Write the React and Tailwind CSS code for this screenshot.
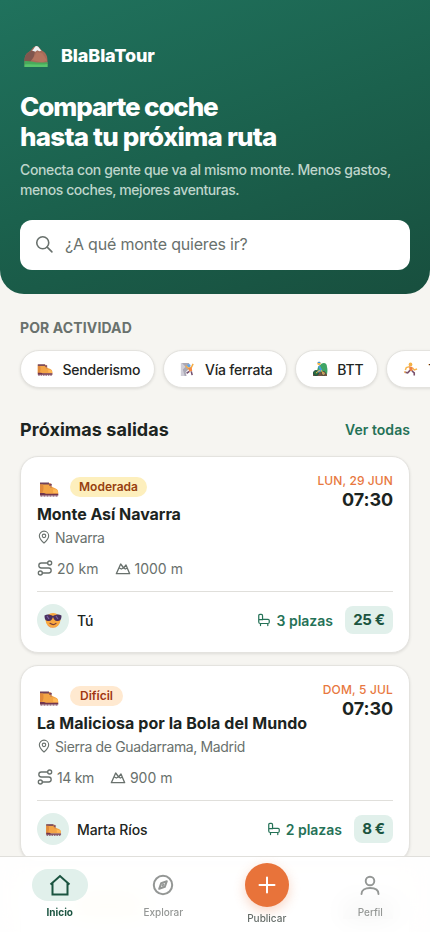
import React from "react";

const FONT = "font-['Inter','Liberation_Sans',sans-serif]";

function Boot({ className }) {
  return (
    <svg viewBox="0 0 20 16" className={className}>
      <path d="M1 2h10.5c.2 3 1.200 4 3.500 4.700 2.500.8 4 1.600 4.200 4.300v2H1z" fill="#f3a546" />
      <path d="M1 1.500h9v2H1z" fill="#70425b" />
      <path d="M1 3.500h3c1 3.500.5 6-1 9H1z" fill="#e18a3c" />
      <path d="M14 8.500c2-1 5 .5 5.200 3.500h-5z" fill="#ffb957" />
      <path d="M10.500 3h2v1.500h-2zM11 6h2" fill="#7b4259" stroke="#7b4259" strokeWidth=".5" />
      <path d="M1 12h4l2 .8h12.300V14.600H1z" fill="#71364f" />
      <path d="M1.500 15h17.500" stroke="#71364f" strokeWidth="1.200" strokeDasharray="2 1" />
    </svg>
  );
}

function Mountain() {
  return (
    <svg viewBox="0 0 24 23" className="h-[23px] w-6">
      <path d="M.5 17c0-6 1-8 5-10.500C8 5 9 1 12.500 1c3 0 3.500 3.500 6 5 4 2 5 5.500 5 10.500v3H.5z" fill="#a66b59" />
      <path d="M.5 16c0-5 2-8 5-9.500l6-2-2 8-4 5z" fill="#80564e" />
      <path d="m8 15 5-8 5.500 1.500 4.500 7-5 2z" fill="#b4745f" />
      <path d="M8 5.500C10 4.500 10.500 1 12.500 1s3 3 5 4.500l-2.200.8-2-1-2 1.500z" fill="#eef3f4" />
      <path d="M.5 16c7-.5 12 3 23 1v5H.5z" fill="#48aa5b" />
      <path d="M.5 19.500c7-1 16 1 23-.5v3H.5z" fill="#5ac46c" />
    </svg>
  );
}

function Climber() {
  return (
    <svg viewBox="0 0 16 16" className="h-[15px] w-[15px]">
      <path d="M1 1h9L8 5l1 3-3 3 1 4H1z" fill="#aaa8b5" />
      <path d="m2 1 4 4-3 3 2 7H1V1z" fill="#d0ced8" />
      <circle cx="9.500" cy="4" r="1.800" fill="#62a5e8" />
      <path d="m6 4 3 3 3-1 2-4" stroke="#f4ae48" strokeWidth="1.600" fill="none" />
      <path d="m8.500 6 4-.5.500 4-3 1z" fill="#f68b41" />
      <path d="m10 10-3 2m5-2 1 4" stroke="#735070" strokeWidth="1.700" fill="none" />
    </svg>
  );
}

function Biker() {
  return (
    <svg viewBox="0 0 16 16" className="h-4 w-4">
      <path d="M6 6c1-2 2-1 3-3 3-2 6-1 6 3 1 3 0 7 0 8H4z" fill="#3fa565" />
      <path d="M1 12c3-3 9-1 14 1v2H1z" fill="#735541" />
      <circle cx="4" cy="12" r="2.500" fill="#2b713f" stroke="#244c42" />
      <circle cx="11.500" cy="12.500" r="2" fill="#c19b60" stroke="#49483f" />
      <circle cx="7" cy="2.500" r="1.700" fill="#f3b64d" />
      <path d="M5.500 2c1-2 3-1 3 0z" fill="#3995df" />
      <path d="m7 5 2 4-3 2" stroke="#469de1" strokeWidth="2" fill="none" />
      <path d="m8 9-4 3m5-3 2 3" stroke="#f1b24a" fill="none" />
    </svg>
  );
}

function Runner() {
  return (
    <svg viewBox="0 0 16 16" className="h-[15px] w-[15px] shrink-0">
      <circle cx="8" cy="2.600" r="2" fill="#f4b247" />
      <path d="M7 5 3.500 6 2.500 8.500M10 6l2 2.500 3-1" stroke="#f7b54b" strokeWidth="1.500" fill="none" />
      <path d="m6.500 4.500 3.500.8.300 4.200H7z" fill="#ef8143" />
      <path d="m7.500 9-2.500 2.500L2 11M9.500 9.500l2.500 2v3" stroke="#79516c" strokeWidth="1.700" fill="none" />
      <path d="m2.500 11.500-1-1.500" stroke="#f4ad4e" strokeWidth="1.500" />
    </svg>
  );
}

function Cool() {
  return (
    <svg viewBox="0 0 20 20" className="h-5 w-5">
      <circle cx="10" cy="10.300" r="7.400" fill="#f9a83f" />
      <path d="M4 14a7 7 0 0 0 12 0c-2 4-9 6-12 0" fill="#e87649" />
      <path d="M1.500 5.500c3-1.500 5-1 8.500.5 3.500-1.500 5.500-2 8.500-.5 0 4.500-1.500 5.500-4.500 5.500-2 0-3-1.500-4-4-1 2.500-2 4-4 4-3 0-4.500-1-4.500-5.500" fill="#49305f" />
      <path d="m4 6 2 3m7-3 2 3" stroke="#7962a5" strokeWidth="1.200" />
      <path d="M7 13.300c2 1.500 4.500 1.500 6 0" stroke="#783e3d" strokeWidth="1.200" fill="none" strokeLinecap="round" />
    </svg>
  );
}

function Line({ className, children, sw = 1.5 }) {
  return (
    <svg viewBox="0 0 24 24" className={className} fill="none" stroke="currentColor" strokeWidth={sw} strokeLinecap="round" strokeLinejoin="round">
      {children}
    </svg>
  );
}

function Chip({ icon, label }) {
  return (
    <button className="flex h-[38px] shrink-0 items-center rounded-full border border-[#e4e3df] bg-white pr-[13.4px] pl-4 text-[14px] font-medium whitespace-nowrap text-[#1f2623] shadow-[0_1px_3px_rgba(0,0,0,0.1)]">
      <span className="mr-[9.5px] flex w-4 shrink-0 justify-center">{icon}</span>
      <span className="tracking-[-0.24px]">{label}</span>
    </button>
  );
}

function Trip({ level, levelClass, title, titleClass, place, placeClass, km, kmClass, climb, date, dateClass, avatar, person, seats, price, priceClass }) {
  return (
    <article className="h-[197px] rounded-[18px] border border-[#e4e3df] bg-white px-4 pt-4 shadow-[0_1px_3px_rgba(0,0,0,0.1)]">
      <div className="flex h-[73px] justify-between">
        <div className="pt-1">
          <div className="flex h-5 items-center">
            <Boot className="ml-0.5 mt-1 h-4 w-5" />
            <span className={`ml-[11px] flex h-5 items-center justify-center rounded-full text-[12px] font-semibold ${levelClass}`}>{level}</span>
          </div>
          <h3 className={`mt-[5px] whitespace-nowrap text-[16px] leading-6 font-bold text-[#1c2421] ${titleClass}`}>{title}</h3>
          <p className="flex h-[22px] items-center whitespace-nowrap text-[14px] text-[#69716d]">
            <Line className="mr-1 h-3.5 w-3.5" sw={1.9}>
              <path d="M20 10c0 4.993-5.539 10.193-7.399 11.799a1 1 0 0 1-1.202 0C9.539 20.193 4 14.993 4 10a8 8 0 0 1 16 0" />
              <circle cx="12" cy="10" r="3" />
            </Line>
            <span className={placeClass}>{place}</span>
          </p>
        </div>
        <div className="-ml-24 text-right">
          <p className={`whitespace-nowrap text-[12px] leading-4 font-medium text-[#e87840] ${dateClass}`}>{date}</p>
          <p className="text-[18px] leading-[22px] font-bold tracking-[-0.1px] text-[#1c2421]">07:30</p>
        </div>
      </div>
      <div className="mt-3 flex h-5 items-center text-[14px] text-[#69716d]">
        <Line className="mr-1 h-4 w-4" sw={2}>
          <circle cx="5" cy="19.500" r="3" />
          <path d="M8 19.500h9.500a3.700 3.700 0 0 0 0-7.500h-11a3.700 3.700 0 0 1 0-7.500H16" />
          <circle cx="19" cy="4.500" r="3" />
        </Line>
        <span className={kmClass}>{km}</span>
        <Line className="mr-1 ml-4 h-4 w-4" sw={2}>
          <path d="M2 20.500 8.500 6l4.500 6 3.500-4.500 5.500 13ZM6.500 12l3 1.500 3-1.500 3 1.500 3-1.500" />
        </Line>
        <span>{climb}</span>
      </div>
      <div className="mt-[13px] flex h-[45px] items-center border-t border-[#e0dfdb] pt-3">
        <span className="flex h-8 w-8 items-center justify-center rounded-full bg-[#e1f0eb]">{avatar}</span>
        <span className="ml-2 text-[14px] font-medium tracking-[-0.1px] text-[#1c2421]">{person}</span>
        <span className="ml-auto flex items-center text-[14px] font-semibold text-[#257257]">
          <Line className="mr-[5px] h-3.5 w-3.5" sw={2.1}>
            <path d="M3 13V4.500A2 2 0 0 1 5 2.500h2.500a2 2 0 0 1 2 2V11H19a2 2 0 0 1 2 2v3a2 2 0 0 1-2 2H5.500A2.500 2.500 0 0 1 3 15.500zM3 11.500h6.500M6 18v3.500M18.500 18v3.500" />
          </Line>
          {seats}
        </span>
        <span className={`ml-3 flex h-7 items-center justify-center rounded-lg bg-[#e1f0eb] text-[15px] font-bold tracking-[-0.35px] text-[#1b5440] ${priceClass}`}>{price}</span>
      </div>
    </article>
  );
}

export default function App() {
  return (
    <div className={`relative h-[932px] w-[430px] overflow-hidden bg-[#f6f5f1] ${FONT}`}>
      <header className="h-[294px] rounded-b-[24px] bg-[linear-gradient(160deg,#20725d_0%,#1b614d_50%,#184f3e_100%)] px-5 pt-11">
        <div className="flex h-6 items-center pl-1">
          <Mountain />
          <span className="ml-[13px] -mt-0.5 text-[18px] font-extrabold tracking-[-0.12px] text-white">BlaBlaTour</span>
        </div>
        <h1 className="mt-6 text-[26px] leading-[30px] font-extrabold whitespace-nowrap text-white">
          <span className="block tracking-[-1.12px]">Comparte coche</span>
          <span className="block tracking-[-0.78px]">hasta tu próxima ruta</span>
        </h1>
        <p className="mt-2 text-[14px] leading-5 font-medium whitespace-nowrap text-[#bed5cb]">
          <span className="block tracking-[-0.37px]">Conecta con gente que va al mismo monte. Menos gastos,</span>
          <span className="block tracking-[-0.44px]">menos coches, mejores aventuras.</span>
        </p>
        <div className="mt-5 flex h-[50px] items-center rounded-[12px] bg-white pb-0.5 pl-[14px] text-[#69716d]">
          <Line className="h-5 w-5" sw={1.9}>
            <circle cx="10.500" cy="10.500" r="7.200" />
            <path d="m15.800 15.800 5.700 5.700" />
          </Line>
          <span className="ml-[11px] text-[16px] tracking-[-0.2px]">¿A qué monte quieres ir?</span>
        </div>
      </header>

      <section>
        <h2 className="mt-6 ml-5 text-[14px] leading-5 font-bold tracking-[0.12px] text-[#69716d]">POR ACTIVIDAD</h2>
        <div className="mt-3 ml-5 flex gap-2">
          <Chip icon={<Boot className="h-[13px] w-4" />} label="Senderismo" />
          <Chip icon={<Climber />} label="Vía ferrata" />
          <Chip icon={<Biker />} label="BTT" />
          <Chip icon={<Runner />} label="Trail" />
        </div>
      </section>

      <section className="px-5">
        <div className="mt-[29px] flex h-6 items-center justify-between">
          <h2 className="text-[18px] font-bold tracking-[0.06px] text-[#1c2421]">Próximas salidas</h2>
          <a className="text-[14px] font-semibold tracking-[0.05px] text-[#257257]">Ver todas</a>
        </div>
        <div className="mt-[15px] flex flex-col gap-3">
          <Trip
            level="Moderada" levelClass="w-[77px] bg-[#fdefbd] text-[#97400f]"
            title="Monte Así Navarra" titleClass="tracking-[-0.05px]"
            place="Navarra" placeClass="tracking-[-0.42px]"
            km="20 km" kmClass="tracking-[0.05px]" climb="1000 m"
            date="LUN, 29 JUN" dateClass="tracking-[0.1px]" avatar={<Cool />} person="Tú"
            seats="3 plazas" price="25 €" priceClass="w-12"
          />
          <Trip
            level="Difícil" levelClass="w-[53px] bg-[#ffe9d0] text-[#9f3713]"
            title="La Maliciosa por la Bola del Mundo" titleClass="tracking-[0.05px]"
            place="Sierra de Guadarrama, Madrid" placeClass="tracking-[-0.36px]"
            km="14 km" kmClass="tracking-[-0.35px]" climb="900 m"
            date="DOM, 5 JUL" dateClass="tracking-[0.15px]" avatar={<Boot className="h-[13px] w-[17px]" />} person="Marta Ríos"
            seats="2 plazas" price="8 €" priceClass="w-[39px]"
          />
          <div className="h-[197px] rounded-[18px] border border-[#e4e3df] bg-white px-4 pt-5">
            <div className="flex justify-between">
              <span className="ml-[33px] h-5 w-[77px] rounded-full bg-[#fdeaae]" />
              <span className="mt-2 h-4 w-[50px] bg-[#888c89]" />
            </div>
          </div>
        </div>
      </section>

      <nav className="absolute inset-x-0 bottom-0 flex h-[76px] border-t border-[#e0dfdb] bg-white/90 px-2 text-[10px] font-medium text-[#949795] backdrop-blur-md">
        <div className="flex w-[103.5px] flex-col items-center pt-3 font-bold text-[#1b5440]">
          <span className="flex h-8 w-14 items-center justify-center rounded-full bg-[#e1f0eb]">
            <svg viewBox="0 0 24 24" className="h-6 w-6" fill="none" stroke="currentColor" strokeWidth="2">
              <path d="M2.500 11.500 12 3l9.500 8.500M4.500 10v11.500h15V10" />
            </svg>
          </span>
          <span className="mt-[3px] leading-4">Inicio</span>
        </div>
        <div className="flex w-[103.5px] flex-col items-center pt-3">
          <span className="flex h-8 items-center">
            <Line className="h-6 w-6" sw={2}>
              <circle cx="12" cy="12" r="9.200" />
              <path d="m15.800 8.200-2 5.600-5.600 2 2-5.600z" />
              <path d="m11.500 12.500 1-1" />
            </Line>
          </span>
          <span className="mt-[3px] leading-4">Explorar</span>
        </div>
        <div className="flex w-[103.5px] flex-col items-center pt-1.5 text-[#656d69]">
          <span className="flex h-11 w-11 items-center justify-center rounded-full bg-[#e8733a] text-white shadow-[0_4px_12px_rgba(232,115,58,0.3)]">
            <Line className="h-6 w-6" sw={2}><path d="M12 4.500v15M4.500 12h15" /></Line>
          </span>
          <span className="mt-[3px] leading-4">Publicar</span>
        </div>
        <div className="flex w-[103.5px] flex-col items-center pt-3">
          <span className="flex h-8 items-center">
            <Line className="h-6 w-6" sw={1.9}>
              <circle cx="12" cy="8" r="4.300" />
              <path d="M3.500 21c0-4 3.500-6 8.500-6s8.500 2 8.500 6" />
            </Line>
          </span>
          <span className="mt-[3px] leading-4">Perfil</span>
        </div>
      </nav>
    </div>
  );
}
